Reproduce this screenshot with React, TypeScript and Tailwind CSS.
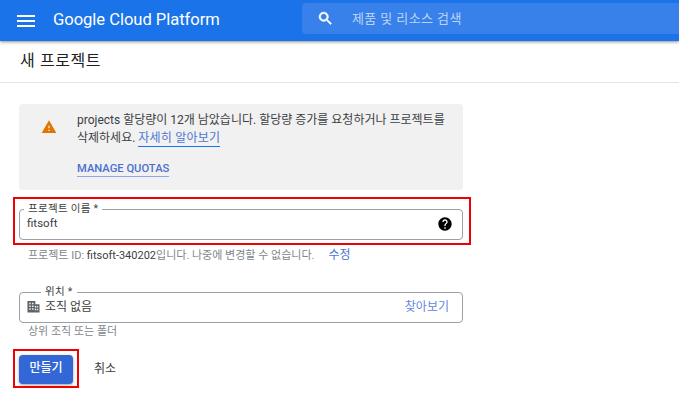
const ko = { fontFamily: 'Roboto, "Noto Sans CJK KR", sans-serif' };

function Field({ label, labelLeft, children }: { label: string; labelLeft: string; children: React.ReactNode }) {
  return (
    <div className="relative h-[31px] w-[444px] rounded-[4px] border border-[#9aa0a6] bg-white flex items-center pb-[2px]">
      <span className={`absolute top-[-8px] ${labelLeft} bg-white px-[4px] text-[10.5px] leading-[14px] tracking-[0.3px] text-[#3c4043]`}>
        {label}
      </span>
      {children}
    </div>
  );
}

export default function App() {
  return (
    <div className="h-[404px] w-[679px] overflow-hidden bg-white text-[#202124]" style={ko}>
      <header className="relative z-10 flex h-[41px] items-center bg-[#1a73e8] shadow-[0_1px_3px_rgba(60,64,67,0.6)]">
        <svg viewBox="0 0 24 24" className="ml-[14px] h-[24px] w-[24px]" fill="#fff">
          <path d="M3 18h18v-2H3v2zm0-5h18v-2H3v2zm0-7v2h18V6H3z" />
        </svg>
        <span className="ml-[15px] w-[249px] text-[16.6px] tracking-[-0.05px] text-white" style={{ fontFamily: 'Roboto, sans-serif' }}>
          Google Cloud Platform
        </span>
        <div className="flex h-[31px] flex-1 items-center rounded-l-[4px] bg-[#3880ea] -translate-y-[2px]">
          <svg viewBox="0 0 24 24" className="ml-[15px] h-[17px] w-[17px]" fill="#fff">
            <path d="M15.500 14h-.79l-.28-.27C15.410 12.590 16 11.110 16 9.500 16 5.910 13.090 3 9.500 3S3 5.910 3 9.500 5.910 16 9.500 16c1.610 0 3.090-.59 4.230-1.570l.27.28v.79l5 4.990L20.490 19l-4.990-5zm-6 0C7.010 14 5 11.990 5 9.500S7.010 5 9.500 5 14 7.010 14 9.500 11.990 14 9.500 14z" stroke="#fff" strokeWidth="1" />
          </svg>
          <span className="ml-[18px] text-[13px] tracking-[0.4px] text-[#bcd5f7]">제품 및 리소스 검색</span>
        </div>
      </header>

      <div className="flex h-[42px] items-center border-b border-[#e3e4e6] pb-[2px] pl-[20px] text-[16px] tracking-[0.6px]">
        새 프로젝트
      </div>

      <main className="relative pl-[19px] pt-[21px]">
        <section className="flex h-[86px] w-[444px] rounded-[4px] bg-[#f1f1f1] pl-[22px] pt-[7px]">
          <svg viewBox="0 0 24 24" className="mt-[8px] h-[16px] w-[16px] shrink-0" fill="#e37400">
            <path d="M1 21h22L12 2 1 21zm12-3h-2v-2h2v2zm0-4h-2v-4h2v4z" />
          </svg>
          <div className="ml-[20px] text-[12px] leading-[18px] text-[#3c4043]">
            <p className="w-[372px]">
              projects 할당량이 12개 남았습니다. 할당량 증가를 요청하거나 프로젝트를 삭제하세요.{' '}
              <a className="inline-block border-b border-[#1a73e8] leading-[15px] tracking-[0.2px] text-[#4a76d4]">자세히 알아보기</a>
            </p>
            <a className="mt-[14px] inline-block border-b border-[#8ea9e8] text-[11.2px] font-medium leading-[15px] text-[#4a6fd0]">
              MANAGE QUOTAS
            </a>
          </div>
        </section>

        <div className="mt-[19px]">
          <Field label="프로젝트 이름 *" labelLeft="left-[4px]">
            <span className="ml-[7px] text-[11.5px] text-[#3c4043]">fitsoft</span>
            <svg viewBox="0 0 24 24" className="absolute right-[9px] h-[16px] w-[16px]" fill="#000">
              <path d="M12 2C6.480 2 2 6.480 2 12s4.480 10 10 10 10-4.480 10-10S17.520 2 12 2zm1 17h-2v-2h2v2zm2.070-7.750l-.9.920C13.450 12.900 13 13.500 13 15h-2v-.5c0-1.100.45-2.100 1.170-2.830l1.240-1.260c.37-.36.59-.86.59-1.410 0-1.100-.9-2-2-2s-2 .9-2 2H8c0-2.210 1.790-4 4-4s4 1.790 4 4c0 .88-.36 1.680-.93 2.250z" />
            </svg>
          </Field>
        </div>
        <p className="mt-[7px] pl-[9px] text-[11px] leading-[16px] text-[#80868b]">
          프로젝트 ID: <span className="text-[#3c4043]">fitsoft-340202</span>입니다. 나중에 변경할 수 없습니다.
          <a className="ml-[14px] text-[12px] text-[#4a76d4]">수정</a>
        </p>

        <div className="mt-[28px]">
          <Field label="위치 *" labelLeft="left-[21px]">
            <svg viewBox="0 0 14 14" className="ml-[7px] h-[13px] w-[13px]" fill="#5f6368">
              <path d="M0.500 1h8.500v3.500h4.500V13.500H0.500z" />
              <path fill="#fff" d="M2.500 3h1.500v1.500H2.500zM5.500 3H7v1.500H5.500zM2.500 6h1.500v1.500H2.500zM5.500 6H7v1.500H5.500zM8.500 6.500H10V8H8.500zM11 6.500h1V8h-1zM2.500 9h1.500v1.500H2.500zM5.500 9H7v1.500H5.500zM8.500 9.500H10V11H8.500zM11 9.500h1V11h-1z" />
            </svg>
            <span className="ml-[5px] text-[12px] text-[#3c4043]">조직 없음</span>
            <a className="ml-auto mr-[13px] text-[12px] text-[#5f86e0]">찾아보기</a>
          </Field>
        </div>
        <p className="mt-[1px] pl-[9px] text-[11px] leading-[16px] text-[#80868b]">상위 조직 또는 폴더</p>

        <div className="mt-[15px] flex items-center">
          <button className="h-[29px] w-[54px] rounded-[4px] bg-[#3367d6] pb-[3px] text-[12px] font-medium text-white shadow-[0_1px_3px_rgba(60,64,67,0.5)]">
            만들기
          </button>
          <span className="ml-[21px] pb-[2px] text-[12px] text-[#3c4043]">취소</span>
        </div>

        {/* red annotation boxes drawn over the form */}
        <div className="absolute left-[13px] top-[114px] h-[48px] w-[458px] border-2 border-[#f00000]" />
        <div className="absolute left-[13px] top-[266px] h-[39px] w-[66px] border-2 border-[#f00000]" />
      </main>
    </div>
  );
}
